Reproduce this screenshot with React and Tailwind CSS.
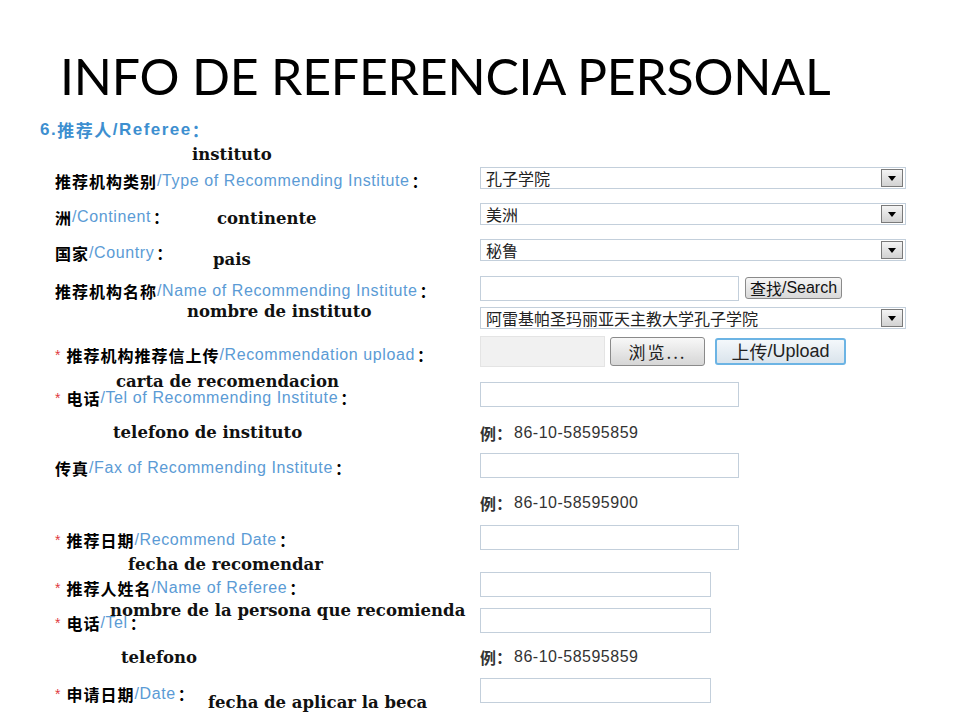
import React from "react";

const LBL = { fontFamily: '"Liberation Sans", Arial, "Noto Sans CJK SC", sans-serif' };
const CJK = { fontFamily: '"Noto Sans CJK SC", "Liberation Sans", sans-serif' };
const ANN = { fontFamily: '"DejaVu Serif", "Liberation Serif", serif' };

function Label({ star, zh, en }) {
  return (
    <div className="w-[425px] shrink-0 pl-[55px] pt-[6px] flex items-center whitespace-nowrap text-[16px] leading-none" style={LBL}>
      {star && <span className="text-[#e0393e] mr-[6px] text-[14px]">*</span>}
      <span className="font-bold text-black tracking-[1px]" style={CJK}>{zh}</span>
      <span className="text-[#5b9bd5] tracking-[0.6px]">/{en}</span>
      <span className="font-bold text-black ml-[2px]" style={CJK}>：</span>
    </div>
  );
}

function Select({ value }) {
  return (
    <div className="w-[426px] h-[22px] border border-[#c3cfdb] bg-white flex items-center justify-between pl-[5px] pr-[2px]">
      <span className="text-[16px] leading-none text-[#222]" style={CJK}>{value}</span>
      <div className="w-[22px] h-[18px] border border-[#7a7a7a] bg-gradient-to-b from-[#f4f4f4] to-[#d2d2d2] flex items-center justify-center">
        <div className="w-0 h-0 border-l-[4px] border-r-[4px] border-t-[5px] border-l-transparent border-r-transparent border-t-black" />
      </div>
    </div>
  );
}

function Input({ w = "w-[259px]", h = "h-[25px]" }) {
  return <div className={`${w} ${h} border border-[#c3cfdb] bg-white`} />;
}

function Example({ text }) {
  return (
    <div className="flex items-center text-[16px] text-[#333] leading-none" style={LBL}>
      <span className="font-bold" style={CJK}>例：</span>
      <span className="tracking-[0.5px] ml-[2px]">{text}</span>
    </div>
  );
}

function Row({ mt, h, label, children }) {
  return (
    <div className={`flex items-center ${mt} ${h}`}>
      {label ? label : <div className="w-[425px] shrink-0" />}
      <div className="pl-[55px] flex items-center">{children}</div>
    </div>
  );
}

function Ann({ className, children }) {
  return (
    <div className={`absolute whitespace-nowrap text-[16.5px] font-bold text-[#111] leading-none ${className}`} style={ANN}>
      {children}
    </div>
  );
}

export default function App() {
  return (
    <div className="relative w-[960px] h-[720px] bg-white overflow-hidden">
      <div className="h-[112px] pl-[60px] pt-[51px]">
        <h1 className="text-[50px] leading-none text-black tracking-[-0.2px]" style={{ fontFamily: 'Lato, "Open Sans", sans-serif' }}>
          INFO DE REFERENCIA PERSONAL
        </h1>
      </div>

      <div className="mt-[9px] h-[18px] pl-[40px] flex items-center text-[17px] font-bold text-[#3d8fd0] tracking-[1.5px]" style={LBL}>
        <span>6.</span>
        <span style={CJK}>推荐人</span>
        <span>/Referee</span>
        <span style={CJK}>：</span>
      </div>

      <Row mt="mt-[28px]" h="h-[22px]" label={<Label zh="推荐机构类别" en="Type of Recommending Institute" />}>
        <Select value="孔子学院" />
      </Row>
      <Row mt="mt-[14px]" h="h-[22px]" label={<Label zh="洲" en="Continent" />}>
        <Select value="美洲" />
      </Row>
      <Row mt="mt-[14px]" h="h-[22px]" label={<Label zh="国家" en="Country" />}>
        <Select value="秘鲁" />
      </Row>
      <Row mt="mt-[15px]" h="h-[24px]" label={<Label zh="推荐机构名称" en="Name of Recommending Institute" />}>
        <Input />
        <div className="ml-[6px] w-[97px] h-[22px] border border-[#8a8a8a] rounded-[3px] bg-gradient-to-b from-[#f6f6f6] to-[#d8d8d8] flex items-center justify-center text-[16px] leading-none text-[#111]" style={LBL}>
          <span style={CJK}>查找</span>/Search
        </div>
      </Row>
      <Row mt="mt-[7px]" h="h-[22px]">
        <Select value="阿雷基帕圣玛丽亚天主教大学孔子学院" />
      </Row>
      <Row mt="mt-[7px]" h="h-[31px]" label={<Label star zh="推荐机构推荐信上传" en="Recommendation upload" />}>
        <div className="w-[125px] h-[31px] bg-[#f1f1f1] border border-[#e4e4e4]" />
        <div className="ml-[5px] w-[95px] h-[29px] border border-[#8a8a8a] rounded-[3px] bg-gradient-to-b from-[#f8f8f8] to-[#d6d6d6] flex items-center justify-center text-[17px] text-[#222] tracking-[2px]" style={CJK}>
          浏览...
        </div>
        <div className="ml-[10px] w-[131px] h-[27px] border-[2px] border-[#6cb4e4] rounded-[3px] bg-gradient-to-b from-[#f4f8fb] to-[#dae4ec] flex items-center justify-center text-[18px] text-[#222]" style={LBL}>
          <span style={CJK}>上传</span>/Upload
        </div>
      </Row>
      <Row mt="mt-[15px]" h="h-[25px]" label={<Label star zh="电话" en="Tel of Recommending Institute" />}>
        <Input />
      </Row>
      <Row mt="mt-[17px]" h="h-[18px]">
        <Example text="86-10-58595859" />
      </Row>
      <Row mt="mt-[11px]" h="h-[24px]" label={<Label zh="传真" en="Fax of Recommending Institute" />}>
        <Input />
      </Row>
      <Row mt="mt-[17px]" h="h-[18px]">
        <Example text="86-10-58595900" />
      </Row>
      <Row mt="mt-[13px]" h="h-[24px]" label={<Label star zh="推荐日期" en="Recommend Date" />}>
        <Input />
      </Row>
      <Row mt="mt-[23px]" h="h-[25px]" label={<Label star zh="推荐人姓名" en="Name of Referee" />}>
        <Input w="w-[231px]" />
      </Row>
      <Row mt="mt-[11px]" h="h-[24px]" label={<Label star zh="电话" en="Tel" />}>
        <Input w="w-[231px]" />
      </Row>
      <Row mt="mt-[16px]" h="h-[18px]">
        <Example text="86-10-58595859" />
      </Row>
      <Row mt="mt-[12px]" h="h-[25px]" label={<Label star zh="申请日期" en="Date" />}>
        <Input w="w-[231px]" />
      </Row>

      <Ann className="left-[192px] top-[147px]">instituto</Ann>
      <Ann className="left-[217px] top-[211px]">continente</Ann>
      <Ann className="left-[213px] top-[252px]">pais</Ann>
      <Ann className="left-[187px] top-[304px]">nombre de instituto</Ann>
      <Ann className="left-[116px] top-[374px]">carta de recomendacion</Ann>
      <Ann className="left-[113px] top-[425px]">telefono de instituto</Ann>
      <Ann className="left-[128px] top-[557px]">fecha de recomendar</Ann>
      <Ann className="left-[110px] top-[603px]">nombre de la persona que recomienda</Ann>
      <Ann className="left-[121px] top-[650px]">telefono</Ann>
      <Ann className="left-[208px] top-[695px]">fecha de aplicar la beca</Ann>
    </div>
  );
}
